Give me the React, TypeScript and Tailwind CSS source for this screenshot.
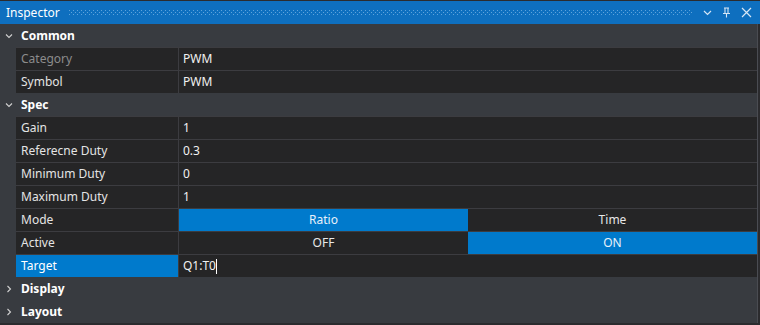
import React from "react";

type Row = {
  label: string;
  value?: string;
  disabled?: boolean;
  kind?: "text" | "toggle" | "edit";
  options?: string[];
  selected?: number;
};

type Group = { name: string; open: boolean; rows: Row[] };

const groups: Group[] = [
  {
    name: "Common",
    open: true,
    rows: [
      { label: "Category", value: "PWM", disabled: true },
      { label: "Symbol", value: "PWM" },
    ],
  },
  {
    name: "Spec",
    open: true,
    rows: [
      { label: "Gain", value: "1" },
      { label: "Referecne Duty", value: "0.3" },
      { label: "Minimum Duty", value: "0" },
      { label: "Maximum Duty", value: "1" },
      { label: "Mode", kind: "toggle", options: ["Ratio", "Time"], selected: 0 },
      { label: "Active", kind: "toggle", options: ["OFF", "ON"], selected: 1 },
      { label: "Target", kind: "edit", value: "Q1:T0" },
    ],
  },
  { name: "Display", open: false, rows: [] },
  { name: "Layout", open: false, rows: [] },
];

const Chevron = ({ open }: { open: boolean }) => (
  <svg width="8" height="8" viewBox="0 0 8 8" className="text-[#d0d0d0]">
    {open ? (
      <path d="M1 2.5 L4 5.5 L7 2.5" fill="none" stroke="currentColor" strokeWidth="1.1" />
    ) : (
      <path d="M2.5 1 L5.5 4 L2.5 7" fill="none" stroke="currentColor" strokeWidth="1.1" />
    )}
  </svg>
);

const PropertyRow = ({ row }: { row: Row }) => {
  const isEdit = row.kind === "edit";
  return (
    <div className="flex h-[23px] border-t border-[#3c3c40] bg-[#252526] ml-[16px]">
      <div
        className={
          "w-[163px] shrink-0 flex items-center pl-[5px] border-r border-[#3c3c40] " +
          (isEdit ? "bg-[#007acc] text-white" : row.disabled ? "text-[#8c8c8c]" : "text-[#e4e4e4]")
        }
      >
        {row.label}
      </div>
      {row.kind === "toggle" ? (
        <div className="flex flex-1">
          {row.options!.map((o, i) => (
            <div
              key={o}
              className={
                "flex-1 flex items-center justify-center " +
                (i === row.selected ? "bg-[#007acc] text-[#e8f1fa]" : "text-[#e8e8e8]")
              }
            >
              {o}
            </div>
          ))}
        </div>
      ) : (
        <div className="flex-1 flex items-center pl-[4px] text-[#f1f1f1]">
          {row.value}
          {isEdit && <span className="inline-block w-px h-[15px] bg-white" />}
        </div>
      )}
    </div>
  );
};

export default function App() {
  return (
    <div
      className="w-[760px] h-[325px] bg-[#2b2b2e] pt-px pb-[2px] flex flex-col text-[12px] overflow-hidden"
      style={{ fontFamily: '"Noto Sans", "Open Sans", sans-serif' }}
    >
      <div className="h-[23px] shrink-0 bg-[#0e6fbf] flex items-center pl-[6px] pr-[8px] text-white">
        <span>Inspector</span>
        <svg className="ml-[9px] flex-1 h-[5px]" height="5">
          <defs>
            <pattern id="grip" width="4" height="4" patternUnits="userSpaceOnUse">
              <rect x="0" y="0" width="1" height="1" fill="#5ea3dc" />
              <rect x="2" y="2" width="1" height="1" fill="#5ea3dc" />
            </pattern>
          </defs>
          <rect width="100%" height="5" fill="url(#grip)" />
        </svg>
        <div className="flex items-center gap-[10px] ml-[10px]">
          <svg width="9" height="9" viewBox="0 0 9 9">
            <path d="M1 3 L4.5 6.5 L8 3" fill="none" stroke="#d6e6f5" strokeWidth="1.2" />
          </svg>
          <svg width="9" height="11" viewBox="0 0 9 11">
            <path d="M2 1 H7 M3 1 V6 M6 1 V6 M1 6.5 H8 M4.5 6.5 V10.5" fill="none" stroke="#d6e6f5" strokeWidth="1.1" />
          </svg>
          <svg width="11" height="11" viewBox="0 0 11 11">
            <path d="M1 1 L10 10 M10 1 L1 10" fill="none" stroke="#d6e6f5" strokeWidth="1.2" />
          </svg>
        </div>
      </div>
      <div className="flex flex-1">
        <div className="w-[757px] bg-[#383b40] flex flex-col">
          {groups.map((g) => (
            <div key={g.name}>
              <div className="h-[23px] flex items-center text-white font-bold">
                <span className="w-[21px] flex justify-center pl-[1px] pr-[4px]">
                  <Chevron open={g.open} />
                </span>
                {g.name}
              </div>
              {g.rows.map((r) => (
                <PropertyRow key={r.label} row={r} />
              ))}
            </div>
          ))}
        </div>
        <div className="w-px bg-[#4a4c52]" />
      </div>
    </div>
  );
}
